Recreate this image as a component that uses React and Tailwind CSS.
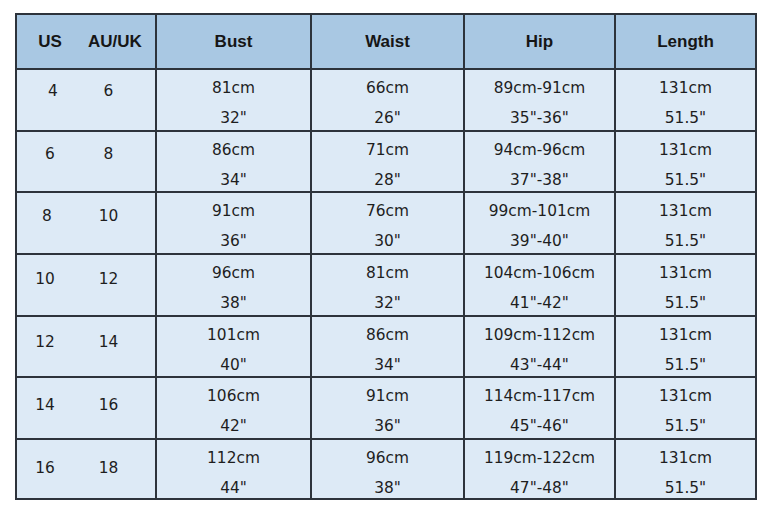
import React from "react";

const rows = [
  { us: "4", au: "6", usShift: "ml-[8px]", pad: "pt-[6px]", h: "h-[62px]", bust: ["81cm", '32"'], waist: ["66cm", '26"'], hip: ["89cm-91cm", '35"-36"'] },
  { us: "6", au: "8", usShift: "ml-[5px]", pad: "pt-[7px]", h: "h-[61px]", bust: ["86cm", '34"'], waist: ["71cm", '28"'], hip: ["94cm-96cm", '37"-38"'] },
  { us: "8", au: "10", usShift: "ml-[2px]", pad: "pt-[8px]", h: "h-[62px]", bust: ["91cm", '36"'], waist: ["76cm", '30"'], hip: ["99cm-101cm", '39"-40"'] },
  { us: "10", au: "12", usShift: "ml-0", pad: "pt-[9px]", h: "h-[62px]", bust: ["96cm", '38"'], waist: ["81cm", '32"'], hip: ["104cm-106cm", '41"-42"'] },
  { us: "12", au: "14", usShift: "ml-0", pad: "pt-[10px]", h: "h-[61px]", bust: ["101cm", '40"'], waist: ["86cm", '34"'], hip: ["109cm-112cm", '43"-44"'] },
  { us: "14", au: "16", usShift: "ml-0", pad: "pt-[12px]", h: "h-[62px]", bust: ["106cm", '42"'], waist: ["91cm", '36"'], hip: ["114cm-117cm", '45"-46"'] },
  { us: "16", au: "18", usShift: "ml-0", pad: "pt-[13px]", h: "h-[60px]", bust: ["112cm", '44"'], waist: ["96cm", '38"'], hip: ["119cm-122cm", '47"-48"'] },
];

const head = "flex h-[55px] items-center justify-center border-r-2 border-b-2 border-[#2d333b] bg-[#a9c8e3] text-[17px] font-bold text-[#161616]";
const cell = "border-r-2 border-b-2 border-[#2d333b] bg-[#ddeaf6] pt-[3px] text-center leading-[30px]";

const TwoLine = ({ lines, h }) => (
  <div className={`${cell} ${h}`}>
    <div>{lines[0]}</div>
    <div>{lines[1]}</div>
  </div>
);

export default function App() {
  return (
    <div className="min-h-[513px] bg-white pt-[13px] pl-[15px]">
      <div
        className="grid w-fit grid-cols-[140px_155px_153px_151px_141px] border-l-2 border-t-2 border-[#2d333b] text-[15.4px] text-[#1e1e1e]"
        style={{ fontFamily: '"DejaVu Sans", Verdana, sans-serif' }}
      >
        <div className={`${head} !justify-start`} style={{ fontFamily: '"Liberation Sans", Arial, sans-serif' }}>
          <span className="w-[66px] text-center">US</span>
          <span className="ml-[5px] w-[38px] text-center">AU/UK</span>
        </div>
        {["Bust", "Waist", "Hip", "Length"].map((t) => (
          <div key={t} className={head} style={{ fontFamily: '"Liberation Sans", Arial, sans-serif' }}>
            {t}
          </div>
        ))}

        {rows.map((r) => (
          <React.Fragment key={r.us}>
            <div className={`flex border-r-2 border-b-2 border-[#2d333b] bg-[#ddeaf6] leading-[30px] ${r.pad} ${r.h}`}>
              <div className="w-[71px]">
                <div className={`w-[56px] text-center ${r.usShift}`}>{r.us}</div>
              </div>
              <div className="w-[41px] text-center">{r.au}</div>
            </div>
            <TwoLine lines={r.bust} h={r.h} />
            <TwoLine lines={r.waist} h={r.h} />
            <TwoLine lines={r.hip} h={r.h} />
            <TwoLine lines={["131cm", '51.5"']} h={r.h} />
          </React.Fragment>
        ))}
      </div>
    </div>
  );
}
